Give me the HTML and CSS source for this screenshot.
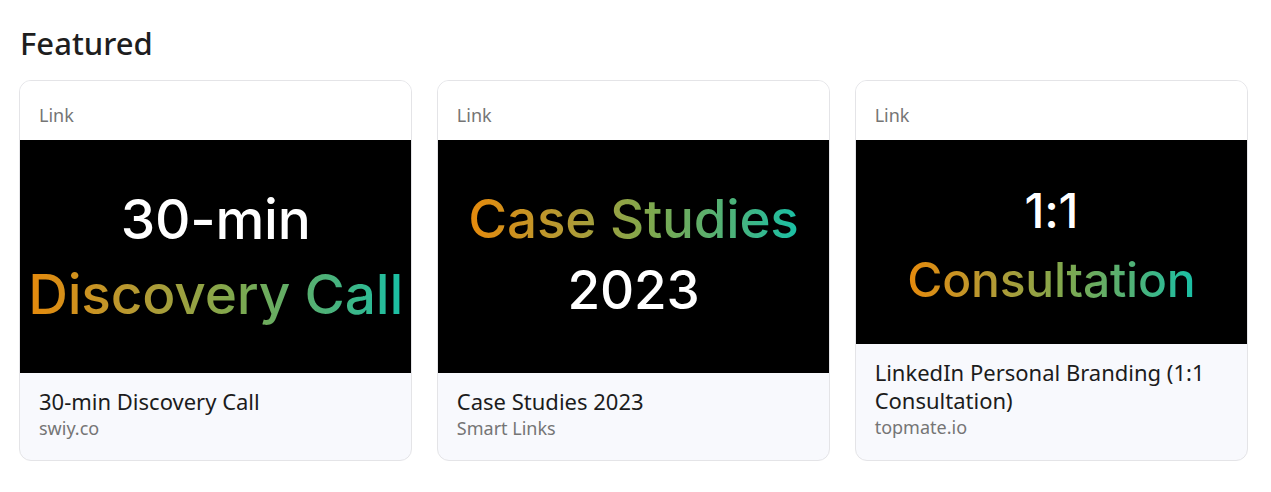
FILE: index.html
```html
<!DOCTYPE html>
<html>
<head>
<meta charset="utf-8">
<link rel="stylesheet" href="styles.css">
</head>
<body>
<section class="featured">
  <h2 class="title">Featured</h2>
  <div class="grid">
    <a class="card">
      <div class="card-head">Link</div>
      <div class="thumb thumb-a">
        <div class="line white">30-min</div>
        <div class="line grad">Discovery Call</div>
      </div>
      <div class="card-foot">
        <div class="name">30-min Discovery Call</div>
        <div class="domain">swiy.co</div>
      </div>
    </a>
    <a class="card">
      <div class="card-head">Link</div>
      <div class="thumb thumb-b">
        <div class="line grad">Case Studies</div>
        <div class="line white">2023</div>
      </div>
      <div class="card-foot">
        <div class="name">Case Studies 2023</div>
        <div class="domain">Smart Links</div>
      </div>
    </a>
    <a class="card">
      <div class="card-head">Link</div>
      <div class="thumb thumb-c">
        <div class="line white">1:1</div>
        <div class="line grad">Consultation</div>
      </div>
      <div class="card-foot">
        <div class="name">LinkedIn Personal Branding (1:1 Consultation)</div>
        <div class="domain">topmate.io</div>
      </div>
    </a>
  </div>
</section>
</body>
</html>
```
FILE: styles.css
```css
* { box-sizing: border-box; }
html, body { margin: 0; background: #ffffff; }
body { font-family: "Noto Sans", "Open Sans", sans-serif; color: #1c1c1c; }
.featured { padding: 23px 23px 0 19px; }
.title {
  margin: 0 0 0 1px;
  font-size: 31px;
  font-weight: 500;
  line-height: 40px;
  color: #1e1e1e;
}
.grid {
  margin-top: 17px;
  display: grid;
  grid-template-columns: repeat(3, 1fr);
  gap: 24.5px;
}
.card {
  display: flex;
  flex-direction: column;
  border: 1px solid #e4e4e7;
  border-radius: 12px;
  overflow: hidden;
  background: #f8f9fd;
  text-decoration: none;
  color: inherit;
}
.card-head {
  background: #fff;
  height: 59px;
  padding: 20px 19px 0;
  font-size: 18px;
  line-height: 28px;
  color: #757575;
}
.thumb {
  background: #000;
  display: flex;
  flex-direction: column;
  align-items: center;
  font-family: "Inter", sans-serif;
  font-weight: 500;
  letter-spacing: -0.2px;
}
.thumb-a { height: 233px; padding-top: 42px; font-size: 55px; line-height: 75px; }
.thumb-b { height: 233px; padding-top: 44px; font-size: 53px; line-height: 71px; }
.thumb-c { height: 204px; padding-top: 36px; font-size: 48px; line-height: 69px; }
.white { color: #fff; }
.grad {
  background: linear-gradient(90deg, #e68a0c 0%, #b39a34 30%, #7fa84e 55%, #4cb27a 80%, #19c0a6 100%);
  -webkit-background-clip: text;
  background-clip: text;
  color: transparent;
}
.card-foot {
  flex: 1;
  padding: 14px 19px 19px;
}
.name { font-size: 22px; line-height: 28px; color: #1c1c1c; }
.domain { font-size: 18px; line-height: 26px; color: #757575; }
```
